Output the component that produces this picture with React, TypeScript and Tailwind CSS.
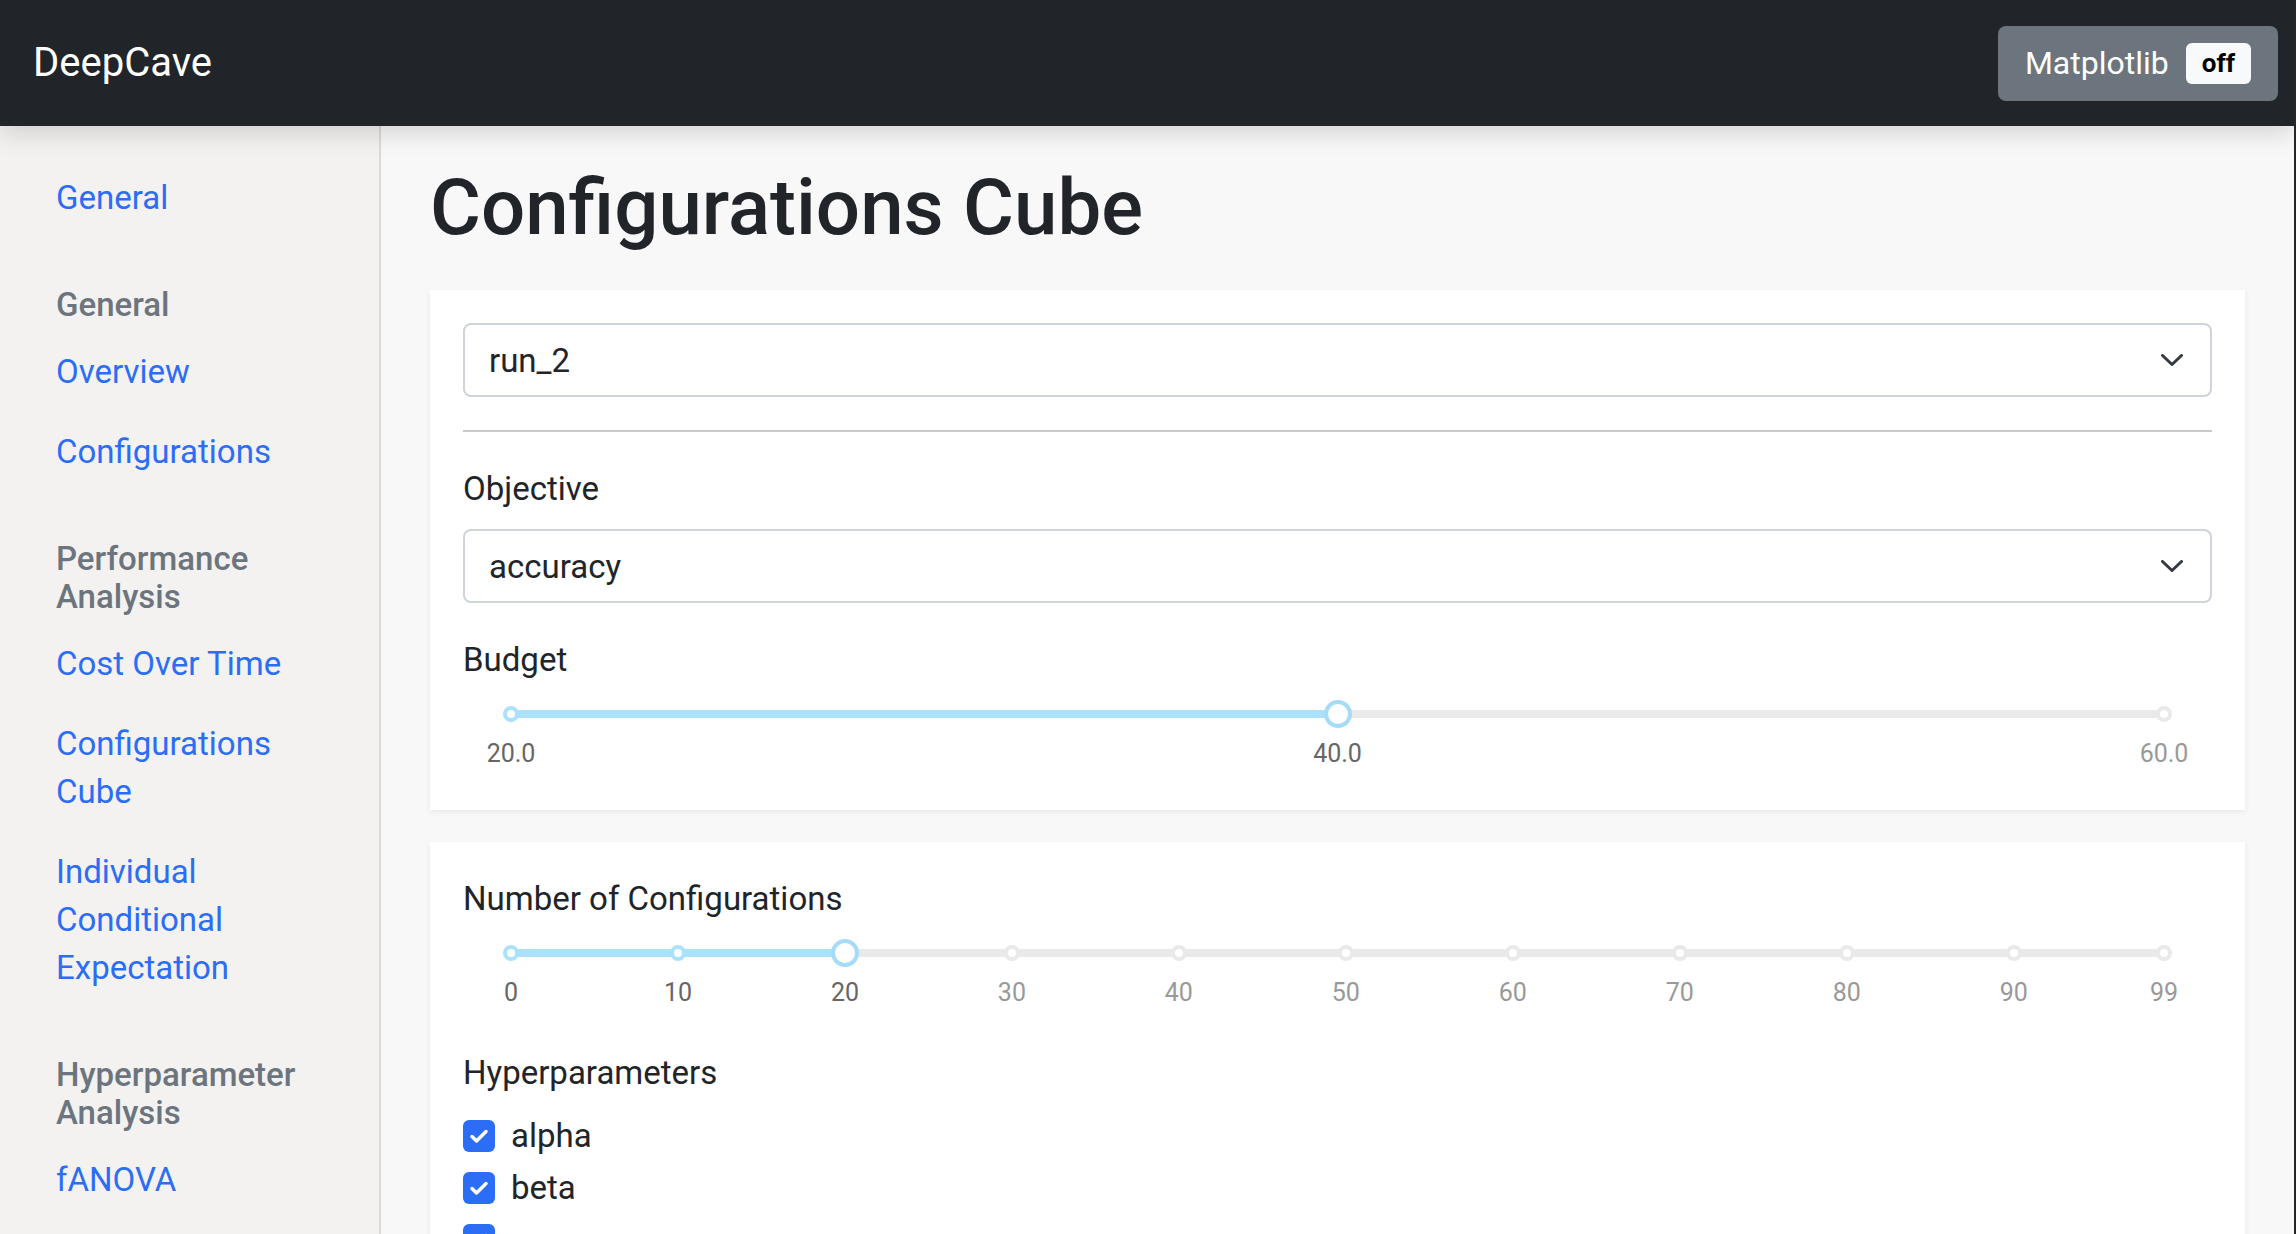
import React from "react";

const BLUE = "#2b6ef5";

function Chevron() {
  return (
    <svg width="22" height="12" viewBox="0 0 22 12" fill="none">
      <polyline points="1.5,1.5 11,10.5 20.5,1.5" stroke="#343a40" strokeWidth="3" strokeLinecap="round" strokeLinejoin="round" />
    </svg>
  );
}

function Select({ value }: { value: string }) {
  return (
    <div className="h-[74px] border-2 border-[#ced4da] rounded-[8px] bg-white pl-[24px] pr-[27px] flex items-center justify-between text-[33px] text-[#212529]">
      <span className="pt-[2px]">{value}</span>
      <Chevron />
    </div>
  );
}

type Mark = { value: number; label: string };

function Slider({ min, max, value, marks }: { min: number; max: number; value: number; marks: Mark[] }) {
  const pct = (v: number) => ((v - min) / (max - min)) * 100;
  return (
    <div className="relative h-[93px] mx-[48px]">
      {/* rail + track */}
      <div className="absolute top-[26px] left-0 right-0 h-2 rounded-full bg-[#e9e9e9]" />
      <div className="absolute top-[26px] left-0 h-2 rounded-full bg-[#abe2fb]" style={{ width: `${pct(value)}%` }} />
      {/* dots */}
      {marks.map((m) => (
        <div
          key={"d" + m.value}
          className={
            "absolute top-[22px] -ml-2 w-4 h-4 rounded-full border-4 bg-white " +
            (m.value <= value ? "border-[#abe2fb]" : "border-[#e9e9e9]")
          }
          style={{ left: `${pct(m.value)}%` }}
        />
      ))}
      {/* handle */}
      <div
        className="absolute top-4 -ml-[14px] w-[28px] h-[28px] rounded-full border-4 border-[#a6dcf7] bg-white"
        style={{ left: `${pct(value)}%` }}
      />
      {/* labels */}
      {marks.map((m) => (
        <span
          key={"l" + m.value}
          className={
            "absolute top-[52px] -translate-x-1/2 text-[25px] leading-[36px] " +
            (m.value <= value ? "text-[#666666]" : "text-[#999999]")
          }
          style={{ left: `${pct(m.value)}%` }}
        >
          {m.label}
        </span>
      ))}
    </div>
  );
}

function Checkbox({ label }: { label?: string }) {
  return (
    <div className="h-[52px] flex items-center gap-4">
      <div className="w-8 h-8 rounded-[6px] flex items-center justify-center" style={{ background: BLUE }}>
        <svg width="20" height="16" viewBox="0 0 20 16" fill="none">
          <polyline points="3,8.5 7.5,13 17,3.5" stroke="white" strokeWidth="3.5" strokeLinecap="round" strokeLinejoin="round" />
        </svg>
      </div>
      {label && <span className="text-[33px] text-[#212529]">{label}</span>}
    </div>
  );
}

const navLink = "block py-4 leading-[48px] text-[33px] text-[#2b6ef5]";
const navHead = "mt-12 mb-2 leading-[38px] text-[33px] font-medium text-[#6c757d]";

export default function App() {
  const configMarks = [0, 10, 20, 30, 40, 50, 60, 70, 80, 90, 99].map((v) => ({ value: v, label: String(v) }));

  return (
    <div className="h-screen overflow-hidden flex flex-col border-r-2 border-[#262626] font-[Roboto,sans-serif]">
      {/* Top bar */}
      <header className="relative z-10 h-[126px] shrink-0 bg-[#212529] flex items-center justify-between pl-[33px] pr-[16px] shadow-[0_8px_24px_rgba(0,0,0,0.14)]">
        <span className="text-[40px] text-white">DeepCave</span>
        <div className="h-[75px] px-[27px] rounded-[8px] bg-[#6c757d] flex items-center gap-[17px]">
          <span className="text-[32px] text-white">Matplotlib</span>
          <span className="h-[41px] px-4 rounded-[6px] bg-[#f8f9fa] text-black font-bold text-[26px] flex items-center">off</span>
        </div>
      </header>

      <div className="flex flex-1 min-h-0">
        {/* Sidebar */}
        <nav className="w-[381px] shrink-0 bg-[#f3f2f1] border-r-2 border-[#dadada] pt-8 pl-[56px]">
          <div className="w-[270px]">
            <a className={navLink}>General</a>
            <div className={navHead}>General</div>
            <a className={navLink}>Overview</a>
            <a className={navLink}>Configurations</a>
            <div className={navHead}>Performance Analysis</div>
            <a className={navLink}>Cost Over Time</a>
            <a className={navLink}>Configurations Cube</a>
            <a className={navLink}>Individual Conditional Expectation</a>
            <div className={navHead}>Hyperparameter Analysis</div>
            <a className={navLink}>fANOVA</a>
          </div>
        </nav>

        {/* Main */}
        <main className="flex-1 bg-[#f8f8f8] px-[49px] pt-[35px]">
          <h1 className="text-[78px] font-medium leading-[1.2] text-[#212529] mb-[35px]">Configurations Cube</h1>

          <section className="bg-white p-[33px] shadow-[0_2px_6px_rgba(0,0,0,0.07)] mb-8">
            <Select value="run_2" />
            <div className="h-[2px] bg-[#c9c9c9] my-[33px]" />
            <div className="text-[33px] leading-[48px] text-[#212529] mb-4">Objective</div>
            <Select value="accuracy" />
            <div className="text-[33px] leading-[48px] text-[#212529] mt-[33px]">Budget</div>
            <Slider
              min={20}
              max={60}
              value={40}
              marks={[
                { value: 20, label: "20.0" },
                { value: 40, label: "40.0" },
                { value: 60, label: "60.0" },
              ]}
            />
          </section>

          <section className="bg-white p-[33px] shadow-[0_2px_6px_rgba(0,0,0,0.07)]">
            <div className="text-[33px] leading-[48px] text-[#212529]">Number of Configurations</div>
            <Slider min={0} max={99} value={20} marks={configMarks} />
            <div className="text-[33px] leading-[48px] text-[#212529] mt-[33px]">Hyperparameters</div>
            <div className="mt-[13px]">
              <Checkbox label="alpha" />
              <Checkbox label="beta" />
              <Checkbox />
            </div>
          </section>
        </main>
      </div>
    </div>
  );
}
